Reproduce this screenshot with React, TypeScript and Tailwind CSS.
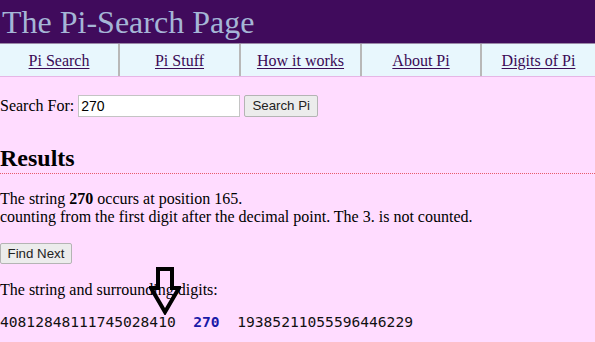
const navItems = ['Pi Search', 'Pi Stuff', 'How it works', 'About Pi', 'Digits of Pi'];

export default function App() {
  return (
    <div className="w-[595px] h-[342px] overflow-hidden bg-[#ffdcff] text-black font-['Liberation_Serif',serif] text-[16px]">
      {/* Header */}
      <div className="h-[43px] bg-[#400b5c] flex items-center pl-[2px]">
        <h1 className="text-[32px] leading-none text-[#a5b6d6] mt-[1px]">The Pi-Search Page</h1>
      </div>

      {/* Nav */}
      <div className="grid grid-cols-[120px_121px_121px_120px_1fr] h-[34px] bg-[#e8f7fd] border-t border-[#9a8aa8] border-b border-b-[#e6b6e6]">
        {navItems.map((item, i) => (
          <div
            key={item}
            className={`flex items-center justify-center ${i < navItems.length - 1 ? 'border-r-2 border-[#b8b8b8]' : ''}`}
          >
            <a href="#" className="text-[#3a0a55] underline underline-offset-2 mt-[1px]">{item}</a>
          </div>
        ))}
      </div>

      {/* Search */}
      <div className="flex items-center mt-[17px]">
        <span className="mr-[4px]">Search For:</span>
        <input
          defaultValue="270"
          className="w-[162px] h-[22px] bg-white border border-[#c4c4c4] px-[2px] font-['Liberation_Sans',sans-serif] text-[14px] outline-none"
        />
        <button className="ml-[4px] w-[74px] h-[22px] bg-[#ececec] border border-[#b4b4b4] rounded-[2px] font-['Liberation_Sans',sans-serif] text-[13.3px] text-[#222]">
          Search Pi
        </button>
      </div>

      {/* Results */}
      <h2 className="mt-[26px] text-[24px] font-bold leading-[28px]">Results</h2>
      <div className="border-b border-dotted border-[#e85a6a] mt-[1px]"></div>

      <div className="mt-[16px] leading-[18px]">
        <div>The string <b>270</b> occurs at position 165.</div>
        <div>counting from the first digit after the decimal point. The 3. is not counted.</div>
      </div>

      <button className="mt-[17px] w-[72px] h-[21px] bg-[#ececec] border border-[#b4b4b4] rounded-[2px] font-['Liberation_Sans',sans-serif] text-[13.3px] text-[#222] block">
        Find Next
      </button>

      <div className="relative">
        <div className="mt-[17px] leading-[18px]">The string and surrounding digits:</div>
        <div className="mt-[14px] font-['DejaVu_Sans_Mono',monospace] text-[14.6px] leading-[18px] whitespace-pre text-[#111]">
          40812848111745028410  <span className="text-[#1a1aa8] font-bold">270</span>  19385211055596446229
        </div>
        {/* pointer arrow over the match */}
        <svg className="absolute left-[149px] top-[-14px]" width="32" height="48" viewBox="0 0 32 48">
          <path d="M9 2 H23 V21 H30 L16 45 L2 21 H9 Z" fill="none" stroke="black" strokeWidth="4" strokeLinejoin="miter" />
        </svg>
        <button className="mt-[11px] ml-[8px] w-[72px] h-[21px] bg-[#ececec] border border-[#b4b4b4] rounded-[2px] block"></button>
      </div>
    </div>
  );
}
